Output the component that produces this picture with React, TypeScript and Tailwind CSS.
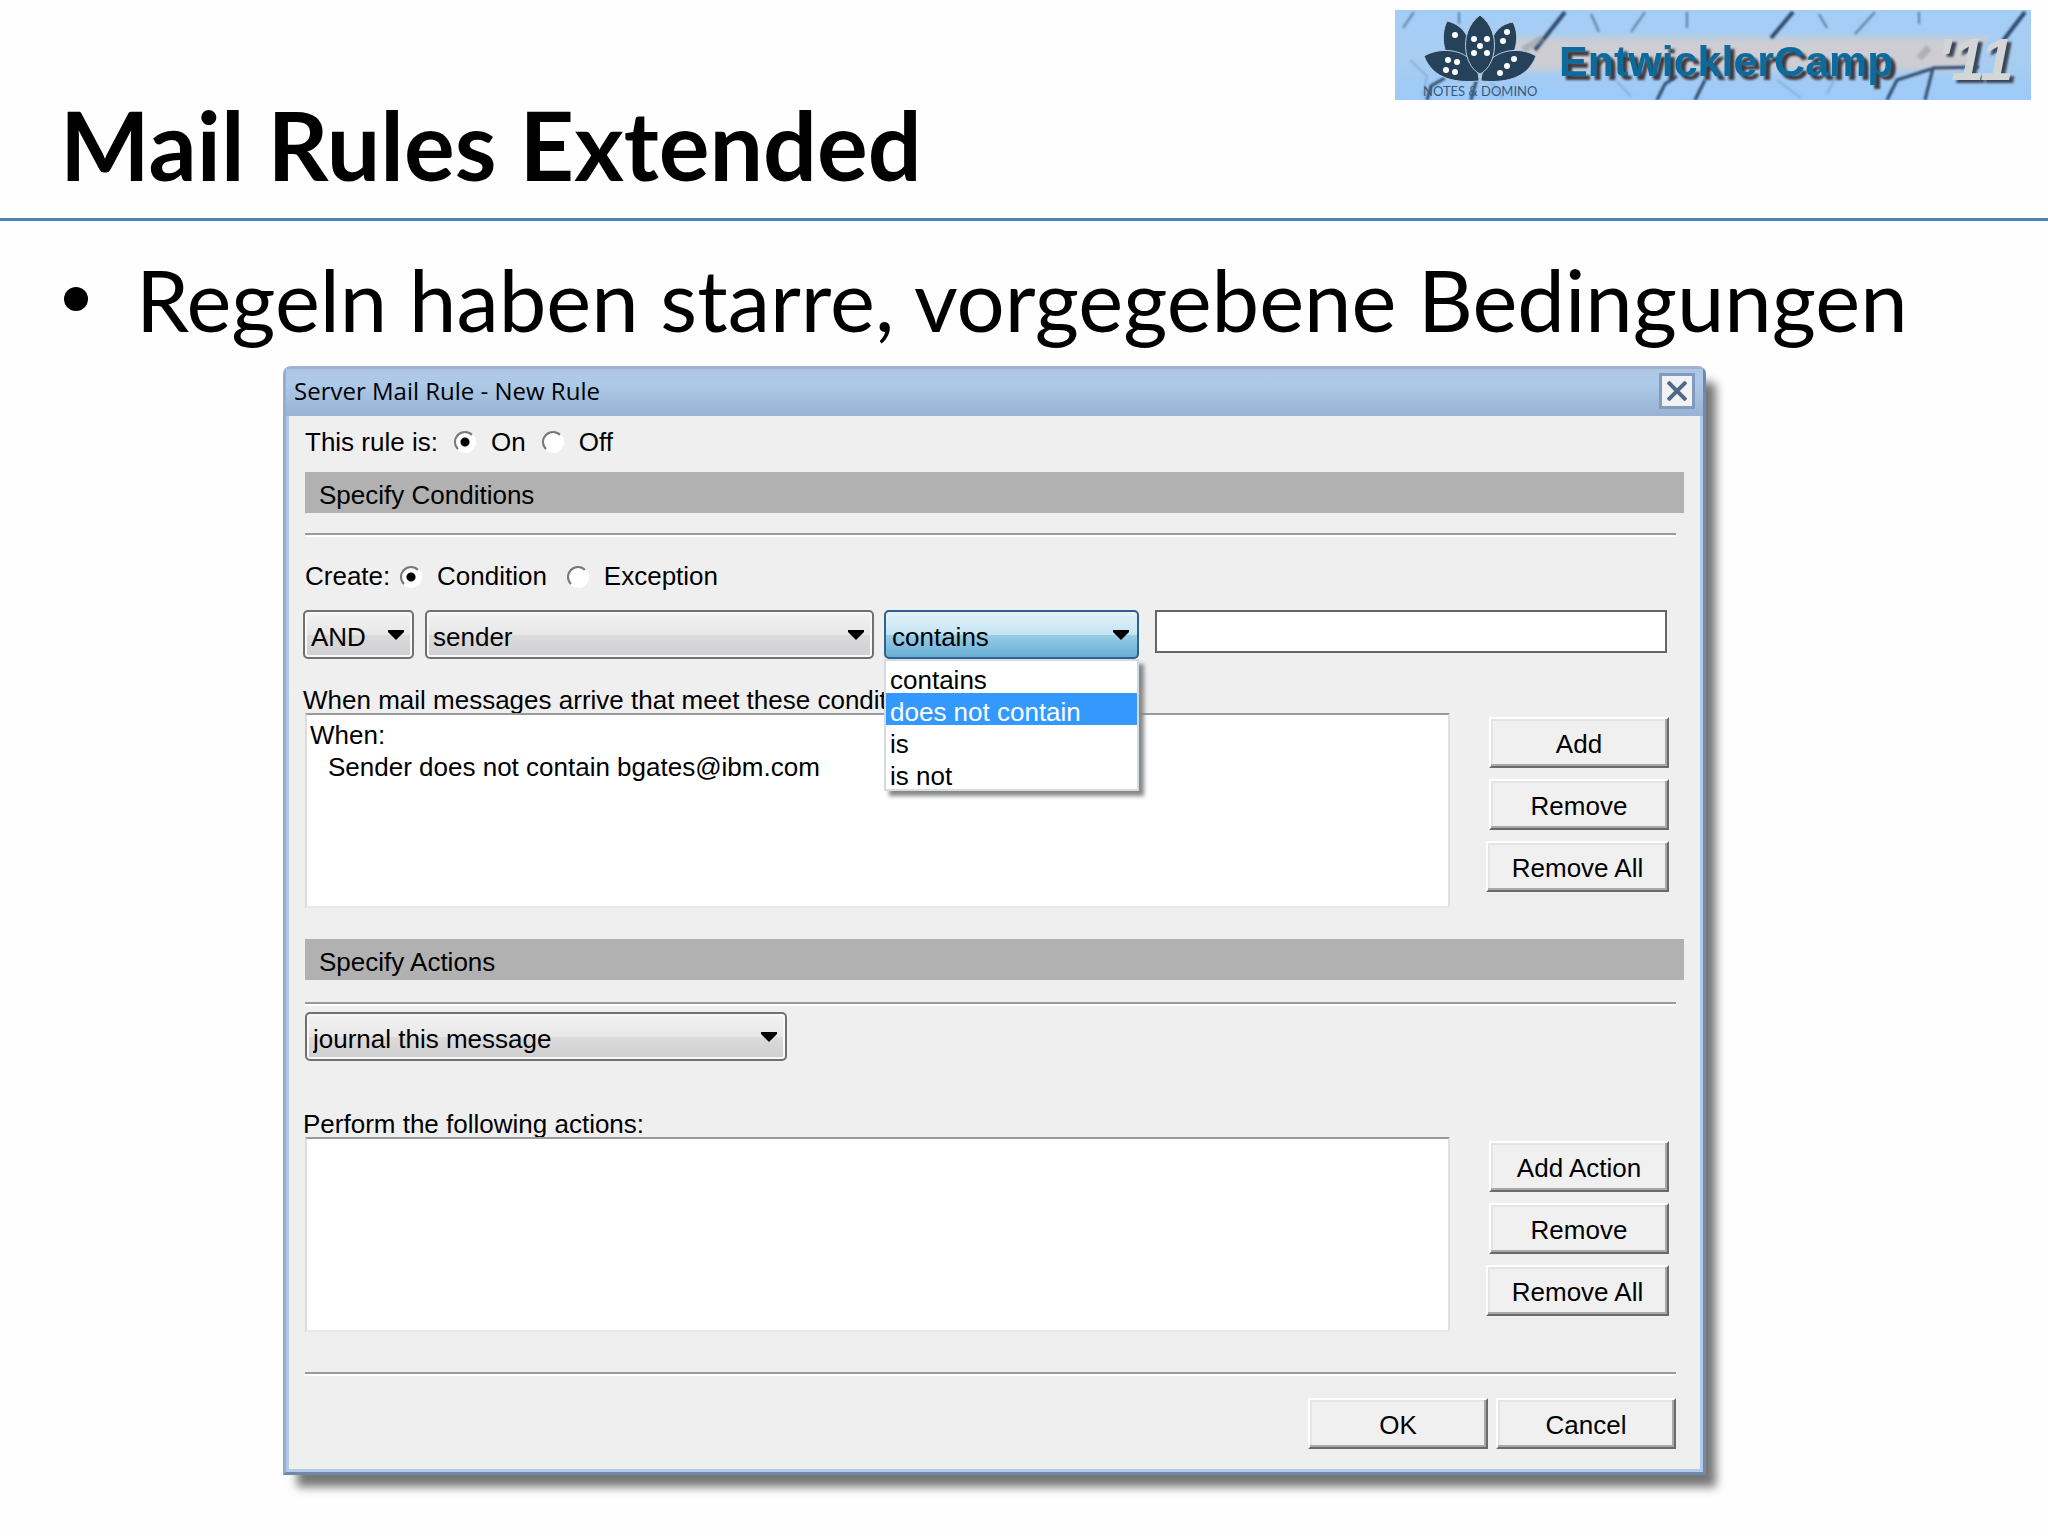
import { type ReactNode } from "react";
import { clsx } from "clsx";

const operators = ["contains", "does not contain", "is", "is not"];

function CampLogo() {
  return (
    <svg viewBox="0 0 636 90" className="h-[90px] w-[636px] shrink-0" role="img" aria-label="EntwicklerCamp '11">
      <defs>
        <linearGradient id="sky" x1="0" y1="0" x2="0" y2="1">
          <stop offset="0" stopColor="#a3cdf8" />
          <stop offset="0.5" stopColor="#a9cdf0" />
          <stop offset="1" stopColor="#9ccaf9" />
        </linearGradient>
        <linearGradient id="sand" x1="0" y1="0" x2="0" y2="1">
          <stop offset="0" stopColor="#cdcdd3" stopOpacity="0" />
          <stop offset="0.25" stopColor="#cdcdd3" />
          <stop offset="0.75" stopColor="#cdcdd3" />
          <stop offset="1" stopColor="#cdcdd3" stopOpacity="0" />
        </linearGradient>
        <filter id="soft" x="-10%" y="-10%" width="120%" height="120%">
          <feGaussianBlur stdDeviation="1" />
        </filter>
      </defs>
      <rect width="636" height="90" fill="url(#sky)" />
      <path d="M110 22H600L560 66H100z" fill="url(#sand)" />
      {/* cracks in the ice */}
      <g fill="none" stroke="#2f4a6c" strokeWidth="2" filter="url(#soft)">
        <path d="M19 2 8 18M64 2v12M250 2l-14 20M196 4l8 18M292 2v16M480 2l-20 22M424 4l8 14M524 2v12" strokeOpacity=".6" />
        <path d="M170 2 140 40M398 2 376 28M630 2 604 36" strokeWidth="4" />
        <path d="M282 66 270 74 262 90M310 70 300 90M82 68l-6 22M50 68 36 76 32 90" strokeWidth="3" />
        <path d="M492 90l10-20 34-11M530 90l8-32 46-1" strokeWidth="3" />
        <path d="M15 50 32 66 28 86M96 72l12 16M382 70l24 18M222 72l14 14M444 60l-12 24" stroke="#6f9ccc" strokeOpacity=".6" />
        <path d="M128 40l20-12M524 48l10-10" stroke="#8d93a0" strokeWidth="7" strokeOpacity=".5" />
      </g>
      {/* lotus with dice pips */}
      <g fill="#26425b" stroke="#b6cde0" strokeWidth="1">
        <path d="M52 11C66 14 76 26 74 40 73 48 72 54 70 58H60C50 46 44 28 52 11z" />
        <path d="M118 12C104 14 94 26 96 42c1 8 2 12 4 16h10c10-14 16-30 8-46z" />
        <path d="M29 46C42 38 64 38 76 50 82 58 84 64 84 71 62 73 38 70 29 46z" />
        <path d="M141 46C128 38 108 38 95 50 89 58 86 64 86 71 108 73 132 70 141 46z" />
        <path d="M85 5C97 14 101 28 99 42 97 54 91 61 85 64 79 61 73 54 71 42 69 28 73 14 85 5z" />
      </g>
      <g fill="#fff">
        <circle cx="60" cy="25" r="3" />
        <circle cx="112" cy="22" r="3" />
        <circle cx="108" cy="31" r="3" />
        <circle cx="79" cy="29" r="3" />
        <circle cx="92" cy="29" r="3" />
        <circle cx="85" cy="36" r="3" />
        <circle cx="79" cy="43" r="3" />
        <circle cx="92" cy="43" r="3" />
        <circle cx="53" cy="50" r="3" />
        <circle cx="62" cy="52" r="3" />
        <circle cx="51" cy="60" r="3" />
        <circle cx="60" cy="62" r="3" />
        <circle cx="119" cy="49" r="3" />
        <circle cx="112" cy="56" r="3" />
        <circle cx="105" cy="63" r="3" />
      </g>
      <text x="28" y="86" className="fill-[#3b5878] font-['Lato',sans-serif] text-[13px]">
        NOTES &amp; DOMINO
      </text>
      <text
        x="164"
        y="66"
        className="fill-[#0c6b9c] font-['Liberation_Sans',sans-serif] text-[43px] font-bold drop-shadow-[4px_4px_1px_#3f3a3f]"
      >
        EntwicklerCamp
      </text>
      <text
        x="542"
        y="70"
        className="fill-[#d3d6d6] font-['Liberation_Sans',sans-serif] text-[60px] font-bold italic drop-shadow-[4px_3px_1px_#3d4656]"
      >
        &apos;11
      </text>
    </svg>
  );
}

function Radio({ name, label, checked }: { name: string; label: string; checked?: boolean }) {
  return (
    <label className="flex items-center gap-[15px]">
      <input
        type="radio"
        name={name}
        defaultChecked={checked}
        className="size-[22px] appearance-none rounded-full border-2 border-t-[#777] border-r-white border-b-white border-l-[#777] bg-white checked:bg-[radial-gradient(circle,#000_4px,#fff_5px)]"
      />
      {label}
    </label>
  );
}

type PickerProps = {
  label: string;
  options: string[];
  open?: boolean;
  className?: string;
  children?: ReactNode;
};

function Picker({ label, options, open, className, children }: PickerProps) {
  return (
    <div className={clsx("relative", className)}>
      <select
        aria-label={label}
        className={clsx(
          "h-[49px] w-full appearance-none rounded-[5px] border-2 pt-1.5 pl-1.5",
          open
            ? "border-[#2c628b] bg-[linear-gradient(#e3f3fb,#c5e4f4_50%,#98cde6_52%,#67aed4)]"
            : "border-[#707070] bg-[linear-gradient(#f3f2f3,#e9e8e9_50%,#dcdbdc_52%,#cfced0)] shadow-[inset_0_0_0_2px_#f8f8f8]"
        )}
      >
        {options.map((option) => (
          <option key={option}>{option}</option>
        ))}
      </select>
      <svg viewBox="0 0 16 10" className="pointer-events-none absolute top-5 right-2.5 h-2.5 w-4">
        <path d="M0 0h16v2L8 10 0 2z" />
      </svg>
      {children}
    </div>
  );
}

function PushButton({ children, wide }: { children: ReactNode; wide?: boolean }) {
  return (
    <button
      type="button"
      className={clsx(
        "h-[51px] border-2 border-t-white border-r-[#6a6a6a] border-b-[#6a6a6a] border-l-white bg-[#f0f0f0] pt-1 shadow-[inset_-2px_-2px_0_#a9a9a9,inset_2px_2px_0_#e4e4e4]",
        wide ? "w-[183px]" : "w-[180px]"
      )}
    >
      {children}
    </button>
  );
}

function SectionBar({ children }: { children: ReactNode }) {
  return <h2 className="ml-0.5 h-[41px] bg-[#b2b1b2] pt-1 pl-3.5 leading-[38px]">{children}</h2>;
}

function Divider({ className }: { className?: string }) {
  return <hr className={clsx("mr-2 ml-0.5 h-1 border-t-2 border-b-2 border-t-[#999a9c] border-b-white", className)} />;
}

type RuleListProps = {
  label: string;
  heading?: string;
  rules: string[];
  actions: string[];
};

function RuleList({ label, heading, rules, actions }: RuleListProps) {
  return (
    <>
      <p className="h-[30px] leading-[34px]">{label}</p>
      <div className="flex items-start gap-9 pr-[15px]">
        <div className="ml-0.5 h-[195px] flex-1 border-2 border-t-[#9a9a9c] border-r-[#e0e0e0] border-b-[#e8e8e8] border-l-[#dcdcdc] bg-white pt-1 pl-[3px] leading-8">
          {heading}
          <ul aria-label={label} className="pl-[18px]">
            {rules.map((rule) => (
              <li key={rule}>{rule}</li>
            ))}
          </ul>
        </div>
        <div className="flex flex-col items-end gap-[11px] pt-1">
          {actions.map((action) => (
            <PushButton key={action} wide={action === "Remove All"}>
              {action}
            </PushButton>
          ))}
        </div>
      </div>
    </>
  );
}

function RuleDialog() {
  return (
    <section
      aria-label="Server Mail Rule - New Rule"
      className="mr-[342px] ml-[283px] rounded-t-lg border-3 border-t-[#9fb2d3] border-r-[#6f88b0] border-b-[#7089a6] border-l-[#93aecf] bg-[#b3cae6] font-['Liberation_Sans',Arial,sans-serif] text-[26px] shadow-[12px_14px_10px_-2px_#777]"
    >
      <header className="flex h-[47px] items-center justify-between bg-[linear-gradient(#afc6e4,#adcae8_30%,#9ab2d3)] pr-2 pb-1 pl-2">
        <h2 className="font-['Open_Sans',sans-serif] text-2xl">Server Mail Rule - New Rule</h2>
        <button
          type="button"
          aria-label="Close"
          className="flex size-9 items-center justify-center border-3 border-[#7f9cbf] bg-[#f2f2f4]"
        >
          <svg viewBox="0 0 20 20" className="size-5" fill="none" stroke="#4f6a88" strokeWidth="4">
            <path d="M1 1l18 18M19 1 1 19" />
          </svg>
        </button>
      </header>

      <form className="mx-[3px] mb-[3px] bg-[#f0eff0] pr-4 pb-5 pl-3.5">
        <div className="flex h-[56px] items-center pb-1">
          <span className="ml-0.5 w-[149px]">This rule is:</span>
          <div className="flex gap-4">
            <Radio name="state" label="On" checked />
            <Radio name="state" label="Off" />
          </div>
        </div>
        <SectionBar>Specify Conditions</SectionBar>
        <Divider className="mt-5" />

        <div className="flex h-[73px] items-center pt-1.5">
          <span className="ml-0.5 w-[95px]">Create:</span>
          <div className="flex gap-5">
            <Radio name="kind" label="Condition" checked />
            <Radio name="kind" label="Exception" />
          </div>
        </div>
        <div className="flex items-start">
          <Picker label="Operator" options={["AND", "OR"]} className="w-[111px]" />
          <Picker label="Field" options={["sender", "subject"]} className="ml-[11px] w-[449px]" />
          <Picker label="Comparison" options={operators} open className="ml-2.5 w-[255px]">
            <ul
              role="listbox"
              aria-label="Comparison options"
              className="absolute top-full left-0 z-10 w-full border-2 border-[#d5dbe2] bg-white shadow-[5px_5px_4px_#888]"
            >
              {operators.map((option) => (
                <li
                  key={option}
                  role="option"
                  aria-selected={option === "does not contain"}
                  className="h-8 pl-1 leading-[38px] aria-selected:bg-[#3399ff] aria-selected:text-white"
                >
                  {option}
                </li>
              ))}
            </ul>
          </Picker>
          <input
            type="text"
            aria-label="Value"
            className="mr-[17px] ml-4 h-[43px] min-w-0 flex-1 border-2 border-[#656467] bg-white px-2"
          />
        </div>

        <div className="mt-6">
          <RuleList
            label="When mail messages arrive that meet these conditions:"
            heading="When:"
            rules={["Sender does not contain bgates@ibm.com"]}
            actions={["Add", "Remove", "Remove All"]}
          />
        </div>

        <div className="mt-[31px]">
          <SectionBar>Specify Actions</SectionBar>
          <Divider className="mt-[22px] mb-1.5" />
          <Picker label="Action" options={["journal this message"]} className="ml-0.5 w-[482px]" />
        </div>

        <div className="mt-[46px]">
          <RuleList
            label="Perform the following actions:"
            rules={[]}
            actions={["Add Action", "Remove", "Remove All"]}
          />
        </div>

        <Divider className="mt-10 mb-[22px]" />
        <div className="flex justify-end gap-2 pr-2">
          <PushButton>OK</PushButton>
          <PushButton>Cancel</PushButton>
        </div>
      </form>
    </section>
  );
}

export default function App() {
  return (
    <main className="min-h-screen bg-[#fefefe] text-black">
      <header className="flex h-[221px] items-start justify-between border-b-3 border-[#4f81b5] pt-2.5 pr-[17px] pl-[60px] font-['Lato',Calibri,sans-serif]">
        <h1 className="mt-[78px] text-[95px] leading-[112px] font-bold">Mail Rules Extended</h1>
        <CampLogo />
      </header>
      <ul className="h-[145px] pt-6 pl-16 font-['Lato',Calibri,sans-serif] text-[85px] leading-[108px] whitespace-nowrap">
        <li className="flex items-center gap-12">
          <span className="size-6 rounded-full bg-black" />
          Regeln haben starre, vorgegebene Bedingungen
        </li>
      </ul>
      <RuleDialog />
    </main>
  );
}
